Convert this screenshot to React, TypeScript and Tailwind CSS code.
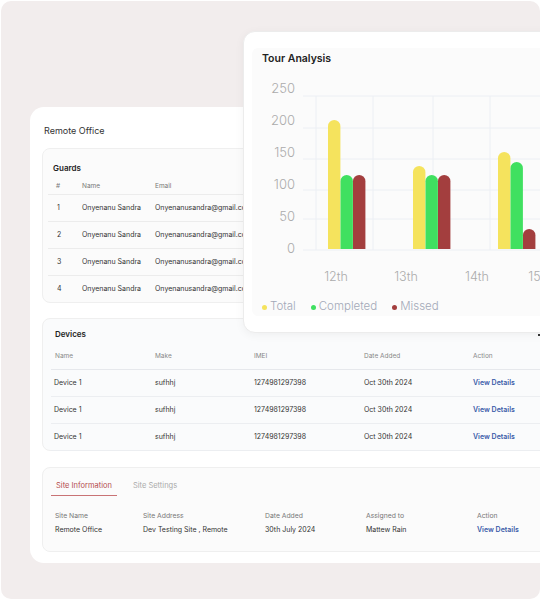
import React from "react";

const guards = [1, 2, 3, 4];
const devices = [1, 2, 3];

const yTicks = [
  { label: "250", y: 87 },
  { label: "200", y: 119 },
  { label: "150", y: 151 },
  { label: "100", y: 183 },
  { label: "50", y: 215 },
  { label: "0", y: 247 },
];

const gridY = [95, 127, 158, 189, 218, 249];
const gridX = [315, 372, 432, 489, 548];

// [x, top] per bar: total, completed, missed
const groups = [
  { label: "12th", cx: 335, bars: [[327, 119], [339.5, 174], [352, 174]] },
  { label: "13th", cx: 405, bars: [[412, 165], [424.5, 174], [437, 174]] },
  { label: "14th", cx: 476, bars: [] },
  { label: "15th", cx: 539, bars: [[497, 151], [509.5, 161], [522, 228]] },
];

const colors = ["#f5e35d", "#40e060", "#a33e3e"];

const Bar = ({ x, top, color }: { x: number; top: number; color: string }) => (
  <path d={`M${x} 248 V${top + 6.2} a6.2 6.2 0 0 1 12.4 0 V248 Z`} fill={color} />
);

const TourChart = () => (
  <div className="absolute left-[242px] top-[30px] w-[320px] h-[302px] rounded-[12px] bg-white border border-[#ececec] shadow-[0_2px_10px_rgba(0,0,0,0.05)] pl-[8px] pt-[16px] pb-[16px]">
    <div className="h-full bg-[#fbfbfb] rounded-[6px] pt-[5px] pb-[4px]">
      <h2 className="pl-[10px] text-[10.5px] leading-[12px] font-semibold text-[#222]">Tour Analysis</h2>
      <svg className="mt-[11px] block" width={302} height={215} viewBox="251 75 302 215">
        {gridY.map((y) => (
          <line key={y} x1={302} x2={560} y1={y} y2={y} stroke="#eceff4" strokeWidth={1} />
        ))}
        {gridX.map((x) => (
          <line key={x} x1={x} x2={x} y1={95} y2={249} stroke="#eceff4" strokeWidth={1} />
        ))}
        {yTicks.map((t) => (
          <text key={t.label} x={294} y={t.y + 4.5} textAnchor="end" fontSize={13} fontWeight={300} fill="#ababab">
            {t.label}
          </text>
        ))}
        {groups.map((g) => (
          <g key={g.label}>
            {g.bars.map(([x, top], i) => (
              <Bar key={i} x={x} top={top} color={colors[i]} />
            ))}
            <text x={g.cx} y={279.5} textAnchor="middle" fontSize={12.5} fontWeight={300} fill="#ababab">
              {g.label}
            </text>
          </g>
        ))}
      </svg>
      {/* legend */}
      <div className="mt-[9px] h-[14px] flex items-center pl-[10px] text-[11.5px] font-light text-[#a3a9b8]">
        <span className="w-[5px] h-[5px] rounded-full bg-[#f5e35d] mr-[3px]" />
        <span>Total</span>
        <span className="w-[5px] h-[5px] rounded-full bg-[#40e060] ml-[15px] mr-[3px]" />
        <span>Completed</span>
        <span className="w-[5px] h-[5px] rounded-full bg-[#a33e3e] ml-[15px] mr-[3px]" />
        <span>Missed</span>
      </div>
    </div>
  </div>
);

const Guards = () => (
  <div className="mt-[12px] h-[155px] rounded-[8px] border border-[#efefef] bg-[#fbfbfb] px-[5px] pt-[14px]">
    <h3 className="pl-[5px] text-[8px] leading-[10px] font-semibold text-[#222]">Guards</h3>
    <div className="mt-[6px] flex h-[16px] items-center border-b border-[#ececec] text-[6.5px] text-[#777]">
      <span className="w-[34px] pl-[8px]">#</span>
      <span className="w-[73px]">Name</span>
      <span>Email</span>
    </div>
    {guards.map((n, i) => (
      <div
        key={n}
        className={`flex h-[27px] items-center text-[7px] text-[#333] ${i < 3 ? "border-b border-[#ececec]" : ""}`}
      >
        <span className="w-[34px] pl-[9px]">{n}</span>
        <span className="w-[73px]">Onyenanu Sandra</span>
        <span>Onyenanusandra@gmail.com</span>
      </div>
    ))}
  </div>
);

const Devices = () => (
  <div className="mt-[15px] h-[133px] rounded-[8px] border border-[#efefef] bg-[#fafbfc] px-[8px] pt-[10px]">
    <h3 className="pl-[4px] text-[8px] leading-[10px] font-semibold text-[#222]">Devices</h3>
    <div className="mt-[5px] flex h-[26px] items-center border-b border-[#e6e8ec] text-[6.5px] text-[#888]">
      <span className="w-[100px] pl-[4px]">Name</span>
      <span className="w-[99px] pl-[4px]">Make</span>
      <span className="w-[110px] pl-[4px]">IMEI</span>
      <span className="w-[109px] pl-[4px]">Date Added</span>
      <span className="pl-[4px]">Action</span>
    </div>
    {devices.map((n) => (
      <div key={n} className="flex h-[27px] items-center border-b border-[#eceef1] text-[7px] text-[#333]">
        <span className="w-[100px] pl-[3px]">Device 1</span>
        <span className="w-[99px] pl-[4px]">sufhhj</span>
        <span className="w-[110px] pl-[4px]">1274981297398</span>
        <span className="w-[109px] pl-[4px]">Oct 30th 2024</span>
        <span className="pl-[4px] font-semibold text-[#3b5ba9]">View Details</span>
      </div>
    ))}
  </div>
);

const SiteInfo = () => (
  <div className="mt-[16px] h-[85px] rounded-[8px] border border-[#efefef] bg-[#fbfbfb] px-[8px] pt-[12px]">
    <div className="flex items-end text-[7.5px]">
      <span className="h-[16px] px-[5px] border-b border-[#c97375] text-[#b44b4e]">Site Information</span>
      <span className="h-[16px] ml-[16px] text-[#aaa]">Site Settings</span>
    </div>
    <div className="mt-[15px] flex text-[6.8px] leading-[10px] text-[#777]">
      <span className="w-[88px] pl-[4px]">Site Name</span>
      <span className="w-[122px] pl-[4px]">Site Address</span>
      <span className="w-[101px] pl-[4px]">Date Added</span>
      <span className="w-[111px] pl-[4px]">Assigned to</span>
      <span className="pl-[4px]">Action</span>
    </div>
    <div className="mt-[4px] flex text-[7px] leading-[10px] text-[#333]">
      <span className="w-[88px] pl-[4px]">Remote Office</span>
      <span className="w-[122px] pl-[4px]">Dev Testing Site , Remote</span>
      <span className="w-[101px] pl-[4px]">30th July 2024</span>
      <span className="w-[111px] pl-[4px]">Mattew Rain</span>
      <span className="pl-[4px] font-semibold text-[#3b5ba9]">View Details</span>
    </div>
  </div>
);

const App = () => {
  return (
    <div className="w-[541px] h-[601px] bg-white overflow-hidden font-['Inter','Noto_Sans',sans-serif]">
      <div className="relative ml-[1px] mt-[1px] w-[539px] h-[598px] rounded-[10px] bg-[#f2eded] overflow-hidden">
        {/* main office card */}
        <div className="ml-[29px] mt-[106px] w-[560px] rounded-[14px] bg-white px-[12px] pt-[18px] pb-[11px]">
          <h1 className="pl-[2px] text-[9px] leading-[11px] text-[#333]">Remote Office</h1>
          <Guards />
          <Devices />
          <SiteInfo />
        </div>
        {/* chart card */}
        <TourChart />
        <span className="absolute left-[537px] top-[333px] w-[2px] h-[2px] bg-[#333]" />
      </div>
    </div>
  );
};

export default App;
